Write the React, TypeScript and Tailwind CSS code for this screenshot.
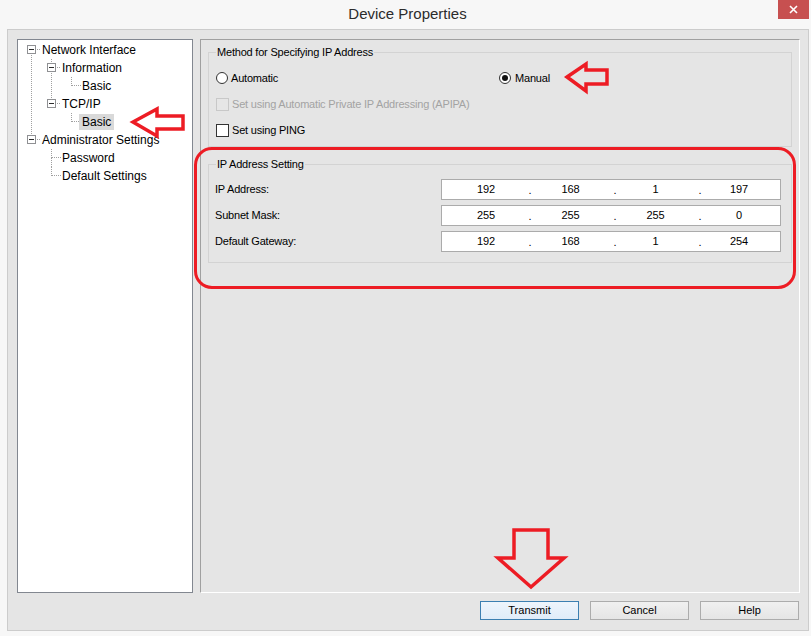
import React from "react";

type Cell = { box?: boolean; up?: boolean; down?: boolean; right?: boolean } | null;

interface TreeRowProps {
  cells: Cell[];
  label: string;
  selected?: boolean;
}

function TreeCell({ cell }: { cell: Cell }) {
  const dot = { stroke: "#a0a0a0", strokeWidth: 1, strokeDasharray: "1 1" };
  if (!cell) return <span className="w-[20px] h-[18px] shrink-0" />;
  const pipe = !cell.box && cell.up && cell.down && !cell.right;
  return (
    <svg width="20" height="18" viewBox="0 0 20 18" className="shrink-0">
      {pipe && <line x1="10.5" y1="0" x2="10.5" y2="18" {...dot} />}
      {!pipe && cell.up && <line x1="10.5" y1="0" x2="10.5" y2={cell.box ? 4 : 9} {...dot} />}
      {!pipe && cell.down && <line x1="10.5" y1={cell.box ? 14 : 9} x2="10.5" y2="18" {...dot} />}
      {cell.right && <line x1={cell.box ? 16 : 11} y1="8.5" x2="20" y2="8.5" {...dot} />}
      {cell.box && (
        <>
          <rect x="6.5" y="4.5" width="8" height="8" fill="#fff" stroke="#8f9093" />
          <line x1="8" y1="8.5" x2="13" y2="8.5" stroke="#2d2d2d" />
        </>
      )}
    </svg>
  );
}

function TreeRow({ cells, label, selected }: TreeRowProps) {
  return (
    <div className="flex items-center h-[18px]">
      {cells.map((c, i) => (
        <TreeCell key={i} cell={c} />
      ))}
      <span
        className={`ml-[-2px] px-[3px] h-[16px] leading-[16px] whitespace-nowrap ${
          selected ? "bg-[#d9d9d9]" : ""
        }`}
      >
        {label}
      </span>
    </div>
  );
}

function Radio({ checked }: { checked?: boolean }) {
  return (
    <span className="w-[12px] h-[12px] rounded-full border border-[#333] bg-white flex items-center justify-center shrink-0">
      {checked && <span className="w-[6px] h-[6px] rounded-full bg-[#111]" />}
    </span>
  );
}

function Check({ disabled }: { disabled?: boolean }) {
  return (
    <span
      className={`w-[13px] h-[13px] border shrink-0 ${
        disabled ? "border-[#c8c8c8] bg-[#e6e6e6]" : "border-[#333] bg-white"
      }`}
    />
  );
}

function IpField({ parts }: { parts: string[] }) {
  const widths = ["w-[84px]", "w-[85px]", "w-[85px]", "w-[82px]"];
  return (
    <div className="w-[340px] h-[21px] border border-[#ababab] bg-white flex items-center pl-[2px]">
      {parts.map((p, i) => (
        <React.Fragment key={i}>
          <span className={`${widths[i]} text-center shrink-0`}>{p}</span>
          {i < 3 && (
            <span className="w-0 flex justify-center translate-x-[2px] translate-y-[1px]">.</span>
          )}
        </React.Fragment>
      ))}
    </div>
  );
}

function Button({ label, primary }: { label: string; primary?: boolean }) {
  return (
    <button
      className={`w-[99px] h-[19px] text-[11px] leading-none text-black border ${
        primary
          ? "border-[#3c7fb1] bg-gradient-to-b from-[#eef5fc] to-[#e0ecf9]"
          : "border-[#acacac] bg-gradient-to-b from-[#f0f0f0] to-[#e5e5e5]"
      }`}
    >
      {label}
    </button>
  );
}

export default function App() {
  const rows: TreeRowProps[] = [
    { cells: [{ box: true, down: true, right: true }], label: "Network Interface" },
    { cells: [{ up: true, down: true }, { box: true, up: true, down: true, right: true }], label: "Information" },
    { cells: [{ up: true, down: true }, { up: true, down: true }, { up: true, right: true }], label: "Basic" },
    { cells: [{ up: true, down: true }, { box: true, up: true, right: true }], label: "TCP/IP" },
    { cells: [{ up: true, down: true }, null, { up: true, right: true }], label: "Basic", selected: true },
    { cells: [{ box: true, up: true, right: true }], label: "Administrator Settings" },
    { cells: [null, { up: true, down: true, right: true }], label: "Password" },
    { cells: [null, { up: true, right: true }], label: "Default Settings" },
  ];

  const ipRows = [
    { label: "IP Address:", parts: ["192", "168", "1", "197"] },
    { label: "Subnet Mask:", parts: ["255", "255", "255", "0"] },
    { label: "Default Gateway:", parts: ["192", "168", "1", "254"] },
  ];

  return (
    <div className="relative w-[811px] h-[636px] bg-[#f7f7f7] overflow-hidden font-['Liberation_Sans',Arial,sans-serif] text-black">
      {/* title bar */}
      <div className="h-[29px] flex items-center justify-center text-[15px] text-[#2b2b2b] pl-[4px]">
        Device Properties
      </div>
      <div className="absolute top-0 right-[2px] w-[31px] h-[19px] bg-[#c75050] flex items-center justify-center">
        <svg width="9" height="9" viewBox="0 0 9 9">
          <path d="M1 1 L8 8 M8 1 L1 8" stroke="#fff" strokeWidth="1.6" />
        </svg>
      </div>

      {/* dialog body */}
      <div className="ml-[7px] w-[802px] h-[602px] border border-[#cccccc] bg-[#e5e5e5] pt-[9px] pl-[9px] pr-[8px] flex flex-col">
        <div className="flex gap-[7px] h-[554px]">
          {/* tree */}
          <div className="w-[176px] h-full border border-[#828790] bg-white pt-[1px] pl-[3px] text-[12px]">
            {rows.map((r, i) => (
              <TreeRow key={i} {...r} />
            ))}
          </div>

          {/* settings panel */}
          <div className="w-[600px] h-full border-t border-l border-[#a0a0a0] border-r-white border-b-white border-r border-b px-[7px] text-[11px] tracking-[-0.2px]">
            <fieldset className="mt-[6px] border border-[#d3d3d3] px-[7px] pt-[6px] pb-[3px]">
              <legend className="px-[1px] leading-[13px]">Method for Specifying IP Address</legend>
              <div className="h-[26px] flex items-center">
                <div className="w-[283px] flex items-center gap-[3px]">
                  <Radio />
                  <span>Automatic</span>
                </div>
                <div className="flex items-center gap-[4px]">
                  <Radio checked />
                  <span>Manual</span>
                </div>
              </div>
              <div className="h-[26px] flex items-center gap-[3px] text-[#a3a3a3]">
                <Check disabled />
                <span>Set using Automatic Private IP Addressing (APIPA)</span>
              </div>
              <div className="h-[26px] flex items-center gap-[3px]">
                <Check />
                <span>Set using PING</span>
              </div>
            </fieldset>

            <fieldset className="mt-[11px] border border-[#d3d3d3] px-[7px] pt-[5px] pb-[8px]">
              <legend className="px-[1px] leading-[13px]">IP Address Setting</legend>
              {ipRows.map((r) => (
                <div key={r.label} className="h-[26px] flex items-center">
                  <span className="w-[226px] -ml-[1px]">{r.label}</span>
                  <IpField parts={r.parts} />
                </div>
              ))}
            </fieldset>
          </div>
        </div>

        <div className="mt-[8px] flex justify-end gap-[11px] pr-[1px]">
          <Button label="Transmit" primary />
          <Button label="Cancel" />
          <Button label="Help" />
        </div>
      </div>

      {/* red annotations */}
      <div className="absolute left-[194px] top-[147px] w-[602px] h-[142px] border-[3px] border-[#ed1c24] rounded-[18px]" />
      <svg className="absolute left-0 top-0 pointer-events-none" width="811" height="636" viewBox="0 0 811 636">
        <g fill="none" stroke="#ed1c24" strokeWidth="3.5" strokeLinejoin="miter">
          <polygon points="133,122 157,109 157,116 183,116 183,129 157,129 157,136" />
          <polygon points="567,77 586,64 586,70 607,70 607,84 586,84 586,91" />
          <polygon points="514,530 548,530 548,558 564,558 531,587 498,558 514,558" />
        </g>
      </svg>
    </div>
  );
}
